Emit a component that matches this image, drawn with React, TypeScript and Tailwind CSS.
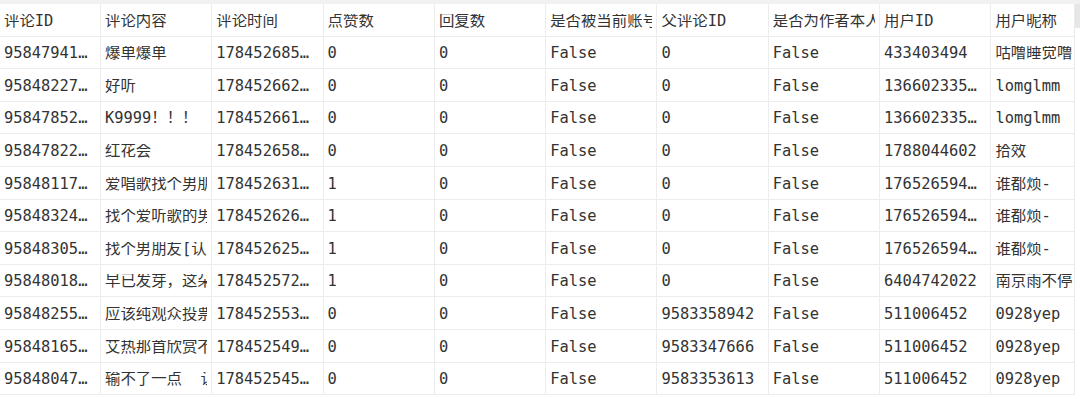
const headers = ['评论ID', '评论内容', '评论时间', '点赞数', '回复数', '是否被当前账号点赞', '父评论ID', '是否为作者本人', '用户ID', '用户昵称']

const rows: string[][] = [
  ['95847941…', '爆单爆单', '178452685…', '0', '0', 'False', '0', 'False', '433403494', '咕噜睡觉噜·'],
  ['95848227…', '好听', '178452662…', '0', '0', 'False', '0', 'False', '136602335…', 'lomglmm'],
  ['95847852…', 'K9999！！！', '178452661…', '0', '0', 'False', '0', 'False', '136602335…', 'lomglmm'],
  ['95847822…', '红花会', '178452658…', '0', '0', 'False', '0', 'False', '1788044602', '拾效'],
  ['95848117…', '爱唱歌找个男朋友', '178452631…', '1', '0', 'False', '0', 'False', '176526594…', '谁都烦-'],
  ['95848324…', '找个爱听歌的男朋友', '178452626…', '1', '0', 'False', '0', 'False', '176526594…', '谁都烦-'],
  ['95848305…', '找个男朋友[认真]', '178452625…', '1', '0', 'False', '0', 'False', '176526594…', '谁都烦-'],
  ['95848018…', '早已发芽，这朵花', '178452572…', '1', '0', 'False', '0', 'False', '6404742022', '南京雨不停'],
  ['95848255…', '应该纯观众投票的', '178452553…', '0', '0', 'False', '9583358942', 'False', '511006452', '0928yep'],
  ['95848165…', '艾热那首欣赏不来', '178452549…', '0', '0', 'False', '9583347666', 'False', '511006452', '0928yep'],
  ['95848047…', '输不了一点  让他们', '178452545…', '0', '0', 'False', '9583353613', 'False', '511006452', '0928yep'],
]

function Cell({ text, last }: { text: string; last?: boolean }) {
  return (
    <div
      className={
        last
          ? 'h-[32.6px] border-b border-[#ececec] pl-[4px] pt-[3px] flex items-center'
          : 'h-[32.6px] border-r border-b border-[#ececec] pl-[4px] pr-[4px] pt-[3px] flex items-center'
      }
    >
      <div className="overflow-hidden whitespace-pre w-full">{text}</div>
    </div>
  )
}

export default function App() {
  return (
    <div
      className="w-[1080px] h-[399px] overflow-hidden bg-white text-[#333333] text-[15.4px] leading-none"
      style={{ fontFamily: '"DejaVu Sans Mono", "Noto Sans CJK SC", monospace' }}
    >
      <div className="h-[4px] bg-[#f1f1f1]" />
      <div className="flex">
        <div className="grid grid-cols-[101px_repeat(8,111.3px)_83px]">
          {headers.map((h, i) => (
            <Cell key={'h' + i} text={h} last={i === 9} />
          ))}
          {rows.map((r, ri) => r.map((c, ci) => <Cell key={ri + '-' + ci} text={c} last={ci === 9} />))}
        </div>
        <div className="flex-1 border-l border-[#ececec]">
          <div className="h-[24px] bg-[#e6e6e6]" />
        </div>
      </div>
    </div>
  )
}
